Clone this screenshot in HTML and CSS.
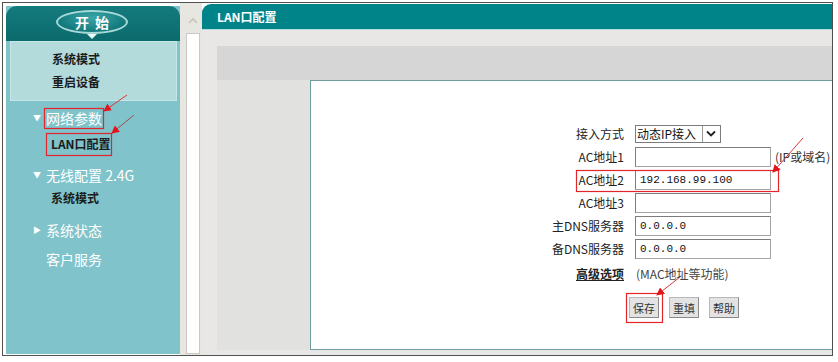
FILE: index.html
```html
<!DOCTYPE html>
<html lang="zh-CN">
<head>
  <meta charset="UTF-8">
  <meta name="viewport" content="width=device-width, initial-scale=1.0">
  <title>LAN口配置</title>
  <link rel="stylesheet" href="styles.css">
</head>
<body>
  <div class="frame">
    <div class="sidebar">
      <div class="start">
        <div class="start-btn">开始</div>
      </div>
      <div class="quick">
        <div class="quick-item">系统模式</div>
        <div class="quick-item">重启设备</div>
      </div>
      <div class="menu">
        <div class="group g-net"><span class="tri">&#9660;</span>网络参数</div>
        <div class="sub s-lan">LAN口配置</div>
        <div class="group g-wifi"><span class="tri">&#9660;</span>无线配置 2.4G</div>
        <div class="sub s-mode">系统模式</div>
        <div class="group g-state"><span class="tri">&#9654;</span>系统状态</div>
        <div class="group g-serv">客户服务</div>
      </div>
    </div>

    <div class="scroll">
      <div class="scroll-up">
        <svg width="10" height="7" viewBox="0 0 10 7"><path d="M1 6 L5 2 L9 6" fill="none" stroke="#c4c4bc" stroke-width="1.6"/></svg>
      </div>
      <div class="scroll-track"></div>
    </div>

    <div class="main">
      <div class="main-head">LAN口配置</div>
      <div class="main-body">
        <div class="stage">
          <div class="panel">
            <form class="form">
              <label>接入方式</label>
              <div class="select"><span class="select-text">动态IP接入</span><span class="select-btn"><svg width="10" height="7" viewBox="0 0 10 7"><path d="M1 1.5 L5 5.5 L9 1.5" fill="none" stroke="#222" stroke-width="1.8"/></svg></span></div>
              <span></span>

              <label>AC地址1</label>
              <input type="text" value="">
              <span class="hint">(IP或域名)</span>

              <label>AC地址2</label>
              <input type="text" value="192.168.99.100">
              <span></span>

              <label>AC地址3</label>
              <input type="text" value="">
              <span></span>

              <label>主DNS服务器</label>
              <input type="text" value="0.0.0.0">
              <span></span>

              <label>备DNS服务器</label>
              <input type="text" value="0.0.0.0">
              <span></span>

              <a class="adv">高级选项</a>
              <span class="adv-note">(MAC地址等功能)</span>
            </form>
            <div class="buttons">
              <button type="button">保存</button>
              <button type="button">重填</button>
              <button type="button">帮助</button>
            </div>
          </div>
        </div>
      </div>
    </div>
  </div>

  <!-- red annotation marks drawn over the screenshot -->
  <svg class="marks" width="838" height="362" viewBox="0 0 838 362">
    <defs>
      <marker id="head" markerWidth="8" markerHeight="8" refX="7" refY="4" orient="auto" markerUnits="userSpaceOnUse">
        <path d="M0 0 L8 4 L0 8 Z" fill="#e3151c"/>
      </marker>
    </defs>
    <rect x="44.5" y="108.5" width="59" height="20" fill="none" stroke="#e0252b" stroke-width="1.2"/>
    <rect x="46.5" y="133.5" width="65" height="22" fill="none" stroke="#e0252b" stroke-width="1.2"/>
    <rect x="576.5" y="170.5" width="202" height="21" fill="none" stroke="#e0252b" stroke-width="1.2"/>
    <rect x="626.5" y="293.5" width="36" height="29" fill="none" stroke="#e0252b" stroke-width="1.2"/>
    <line x1="127" y1="95" x2="104" y2="111" stroke="#d63a3a" stroke-width="1" marker-end="url(#head)"/>
    <line x1="134" y1="115" x2="112" y2="133" stroke="#a05050" stroke-width="1" marker-end="url(#head)"/>
    <line x1="803" y1="138" x2="773" y2="172" stroke="#d63a3a" stroke-width="1" marker-end="url(#head)"/>
    <line x1="680" y1="277" x2="657" y2="295" stroke="#d63a3a" stroke-width="1" marker-end="url(#head)"/>
  </svg>
</body>
</html>
```

FILE: styles.css
```css
body {
  margin: 0;
  background: #fff;
  font-family: "Noto Sans CJK SC", "Liberation Sans", sans-serif;
}
.frame {
  display: flex;
  width: 829px;
  height: 352px;
  margin: 2px 0 0 2px;
  border: 1px solid #505050;
  background: #fff;
}

/* left menu */
.sidebar {
  width: 174px;
  margin: 3px 0 1px 3px;
  background: #80c3cb;
  display: flex;
  flex-direction: column;
}
.start {
  height: 35px;
  border-radius: 11px 11px 0 0;
  background: linear-gradient(#157b7d, #0b6a6c);
  display: flex;
  justify-content: center;
  align-items: center;
}
.start-btn {
  position: relative;
  width: 68px;
  height: 20px;
  margin-left: -2px;
  margin-top: -4px;
  border: 2px solid #a6d8d8;
  border-radius: 50%;
  background: radial-gradient(ellipse at 50% 30%, #3aa6a8, #117779 75%);
  color: #fff;
  font-size: 14px;
  font-weight: bold;
  line-height: 20px;
  text-align: center;
  letter-spacing: 6px;
  text-indent: 6px;
}
.start-btn::after {
  content: "";
  position: absolute;
  left: 29px;
  bottom: -7px;
  border-left: 5px solid transparent;
  border-right: 5px solid transparent;
  border-top: 5px solid #e8f6f6;
}
.quick {
  margin: 0 3px 0 4px;
  padding: 5px 0 7px;
  background: #b3dbdb;
  border: 1px solid #c6e6e6;
}
.quick-item {
  height: 23px;
  line-height: 23px;
  padding-left: 41px;
  font-size: 12px;
  font-weight: bold;
  color: #1b1b1b;
}
.menu {
  padding-top: 7px;
}
.group {
  height: 20px;
  line-height: 20px;
  padding-left: 27px;
  font-size: 14px;
  color: #fff;
}
.tri {
  display: inline-block;
  width: 13px;
  font-size: 8px;
  vertical-align: top;
}
.sub {
  height: 22px;
  line-height: 22px;
  padding-left: 45px;
  font-size: 12px;
  font-weight: bold;
  color: #1b1b1b;
}
.s-lan { margin-top: 5px; }
.g-wifi { margin-top: 10px; }
.s-mode { margin-top: 2px; }
.g-state { margin-top: 11px; }
.g-serv { margin-top: 9px; padding-left: 40px; }

/* scrollbar column */
.scroll {
  width: 22px;
  background: #e7e6e1;
  display: flex;
  flex-direction: column;
  padding: 0 2px 0 6px;
  box-sizing: border-box;
}
.scroll-up {
  height: 30px;
  display: flex;
  justify-content: center;
  align-items: center;
  padding-top: 4px;
  box-sizing: border-box;
}
.scroll-track {
  flex: 1;
  margin-bottom: 1px;
  background: #fff;
  border: 1px solid #c9c9c4;
}

/* content */
.main {
  flex: 1;
  display: flex;
  flex-direction: column;
}
.main-head {
  height: 25px;
  margin-top: 1px;
  padding-left: 15px;
  border-radius: 9px 0 0 0;
  border-bottom: 1px solid #b6d9d9;
  background: #00848a;
  color: #fff;
  font-size: 12px;
  font-weight: bold;
  line-height: 25px;
}
.main-body {
  flex: 1;
  background: #e8e7e6;
  padding: 16px 0 5px 15px;
  display: flex;
}
.stage {
  flex: 1;
  display: flex;
  padding: 34px 0 0 93px;
  background: linear-gradient(#d6d6d6 0 34px, #e1e1e0 34px);
}
.panel {
  flex: 1;
  background: #fff;
  border: 1px solid #6f9c9c;
  border-right: none;
  padding-top: 41px;
}
.form {
  display: grid;
  grid-template-columns: 313px 136px auto;
  grid-auto-rows: 23px;
  column-gap: 11px;
  align-items: center;
  font-size: 12px;
  color: #222;
}
.form label {
  text-align: right;
}
.form input {
  width: 136px;
  height: 20px;
  margin: 0;
  padding: 0 4px;
  box-sizing: border-box;
  border: 1px solid #a4a4a4;
  border-top-color: #7c7c7c;
  border-left-color: #7c7c7c;
  font-family: "Liberation Mono", monospace;
  font-size: 11px;
  color: #111;
}
.select {
  display: flex;
  width: 86px;
  height: 18px;
  box-sizing: border-box;
  border: 1px solid #7c7c7c;
  background: #fff;
}
.select-text {
  flex: 1;
  padding-left: 1px;
  font-size: 12px;
  line-height: 16px;
  color: #111;
}
.select-btn {
  width: 16px;
  margin: 0 1px 0 0;
  border-left: 1px solid #9a9a9a;
  display: flex;
  justify-content: center;
  align-items: center;
}
.hint {
  margin-left: -7px;
  color: #333;
}
.adv {
  grid-row: 7;
  height: 25px;
  line-height: 25px;
  text-align: right;
  font-weight: bold;
  font-size: 12px;
  color: #222;
  text-decoration: underline;
}
.adv-note {
  grid-column: 2 / 4;
  line-height: 25px;
  margin-left: 1px;
  color: #444;
}
.form .adv, .form .adv-note {
  align-self: start;
  margin-top: 1px;
}
.buttons {
  display: flex;
  gap: 10px;
  margin-top: 14px;
  padding-left: 318px;
}
.buttons button {
  width: 30px;
  height: 21px;
  padding: 0;
  border: 1px solid #8a8a8a;
  border-top-color: #b8b8b8;
  border-left-color: #b8b8b8;
  background: #e3e3e3;
  font-family: "Noto Sans CJK SC", sans-serif;
  font-size: 11px;
  color: #333;
}

.marks {
  position: absolute;
  left: 0;
  top: 0;
  pointer-events: none;
}
```
